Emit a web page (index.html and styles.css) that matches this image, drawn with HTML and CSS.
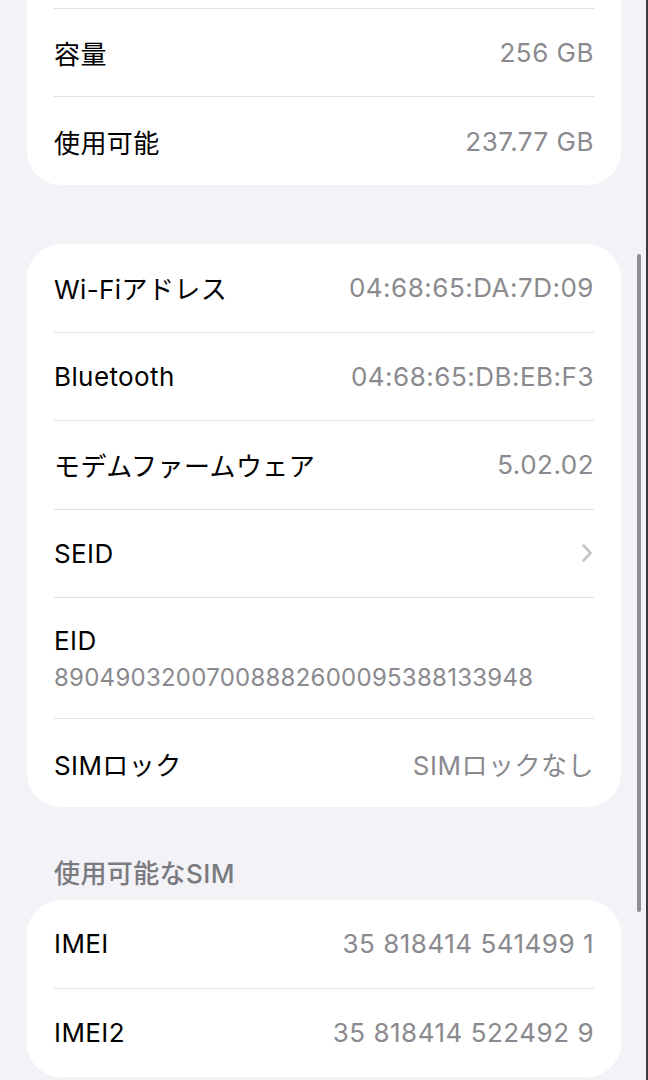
FILE: index.html
```html
<!DOCTYPE html>
<html lang="ja">

<head>
    <meta charset="UTF-8" />
    <meta name="viewport" content="width=device-width, initial-scale=1.0">
    <title>情報</title>
    <link rel="stylesheet" href="styles.css">
</head>

<body>
    <div class="page">
        <!-- ストレージ（上端でスクロールアウト） -->
        <div class="group group-first">
            <div class="row"></div>
            <div class="row"><span class="label">容量</span><span class="value">256 GB</span></div>
            <div class="row"><span class="label">使用可能</span><span class="value">237.77 GB</span></div>
        </div>

        <!-- ネットワーク -->
        <div class="group">
            <div class="row"><span class="label">Wi-Fiアドレス</span><span class="value">04:68:65:DA:7D:09</span></div>
            <div class="row"><span class="label">Bluetooth</span><span class="value">04:68:65:DB:EB:F3</span></div>
            <div class="row"><span class="label">モデムファームウェア</span><span class="value">5.02.02</span></div>
            <div class="row">
                <span class="label">SEID</span>
                <svg class="chevron" width="12" height="20" viewBox="0 0 12 20">
                    <path d="M2.5 2.5 L9.5 10 L2.5 17.5" fill="none" stroke="#c4c4c7" stroke-width="2.6" stroke-linecap="round" stroke-linejoin="round" />
                </svg>
            </div>
            <div class="row row-stack">
                <span class="label">EID</span>
                <span class="value">89049032007008882600095388133948</span>
            </div>
            <div class="row"><span class="label">SIMロック</span><span class="value">SIMロックなし</span></div>
        </div>

        <h2 class="section-title">使用可能なSIM</h2>
        <div class="group">
            <div class="row"><span class="label">IMEI</span><span class="value">35 818414 541499 1</span></div>
            <div class="row"><span class="label">IMEI2</span><span class="value">35 818414 522492 9</span></div>
        </div>
    </div>

    <div class="scrollbar"></div>
    <div class="edge"></div>
</body>

</html>
```

FILE: styles.css
```css
html,
body {
    margin: 0;
    padding: 0;
    height: 100%;
    overflow: hidden;
}

body {
    background: #f2f2f7;
    font-family: 'Inter', 'Noto Sans CJK JP', sans-serif;
    color: #000;
    -webkit-font-smoothing: antialiased;
}

.page {
    padding: 0 27px;
}

.group {
    background: #fff;
    border-radius: 34px;
    padding: 0 27px;
}

.group + .group {
    margin-top: 59px;
}

/* 画面上端で途切れている最初のカード */
.group-first {
    margin-top: -80px;
}

.row {
    display: flex;
    align-items: center;
    justify-content: space-between;
    height: 87.5px;
    border-bottom: 1px solid #e0e0e3;
    font-size: 26px;
    letter-spacing: 0.4px;
}

.row:last-child {
    border-bottom: none;
    height: 88px;
}

.label {
    color: #000;
}

.value {
    color: #8a8a8e;
    letter-spacing: 0.5px;
}

.row-stack {
    flex-direction: column;
    align-items: flex-start;
    justify-content: center;
    height: 120px;
    gap: 7px;
}

.row-stack .value {
    font-size: 24px;
    letter-spacing: 0.25px;
}

.chevron {
    margin-right: 1px;
}

.section-title {
    margin: 50px 0 10px 0;
    padding: 0 27px;
    height: 33px;
    line-height: 33px;
    font-size: 26px;
    font-weight: 500;
    letter-spacing: 0.4px;
    color: #7a7a7f;
}

/* スクロールインジケータ */
.scrollbar {
    position: fixed;
    left: 637px;
    top: 254px;
    width: 4px;
    height: 658px;
    border-radius: 2px;
    background: #8e8e93;
}

.edge {
    position: fixed;
    right: 0;
    top: 0;
    width: 2px;
    height: 100%;
    background: #3a3a3c;
}
```
